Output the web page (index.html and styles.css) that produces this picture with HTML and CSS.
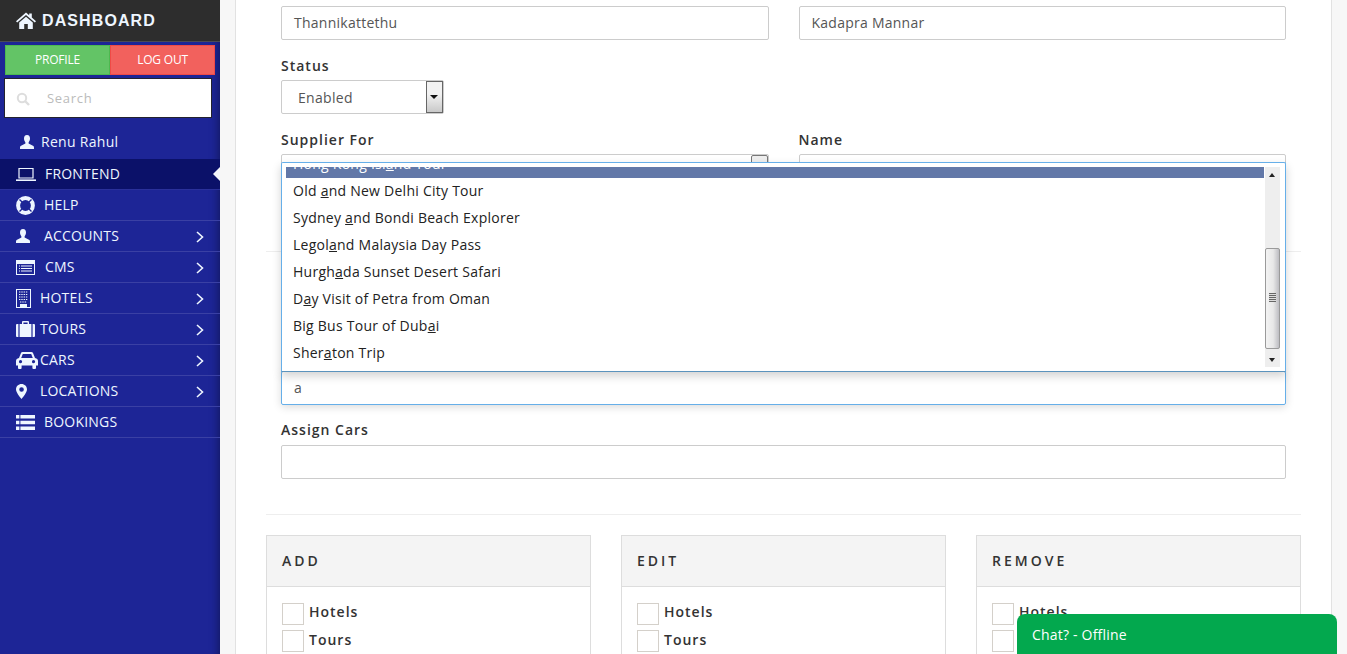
FILE: index.html
```html
<!DOCTYPE html>
<html lang="en">
<head>
<meta charset="UTF-8">
  <title>Dashboard</title>
<link rel="stylesheet" href="styles.css">
</head>

<body>
<aside class="sidebar">
    <div class="brand">
        <svg class="brand-icon" viewBox="0 0 20 17"><path d="M10 0.5 L13.2 3.3 V1.5 H15.8 V5.6 L20 9.2 L18.8 10.6 L10 3 L1.2 10.6 L0 9.2 Z M3.2 10.6 L10 4.8 L16.8 10.6 V17 H11.8 V12 H8.2 V17 H3.2 Z" fill="#eef6ff"/></svg>
        <span>DASHBOARD</span>
    </div>
    <div class="side-buttons">
        <a class="btn-profile">PROFILE</a>
        <a class="btn-logout">LOG OUT</a>
    </div>
    <div class="side-search">
        <svg class="search-icon" viewBox="0 0 14 14"><circle cx="6" cy="6" r="4.2" fill="none" stroke="#ddd" stroke-width="2"/><path d="M9 9 L13 13" stroke="#ddd" stroke-width="2.4"/></svg>
        <span>Search</span>
    </div>
    <div class="side-user">
        <svg class="i-user" viewBox="0 0 14 14"><path d="M7 0 C9.2 0 10 1.8 10 3.6 C10 5.4 9.2 6.6 8.6 7.4 V8.6 L13.4 11 C14 11.4 14 12.4 14 14 H0 C0 12.4 0 11.4 0.6 11 L5.4 8.6 V7.4 C4.8 6.6 4 5.4 4 3.6 C4 1.8 4.8 0 7 0 Z" fill="#eef6ff"/></svg>
        <span>Renu Rahul</span>
    </div>
    <ul class="side-nav">
        <li class="active">
            <svg class="ic ic-laptop" viewBox="0 0 20 13"><path d="M3 .5 H17 V10 H3 Z" fill="none" stroke="#eef6ff" stroke-width="1.2"/><path d="M0 11.4 H20 V13 H0 Z" fill="#eef6ff"/></svg>
            <span class="t-frontend">FRONTEND</span>
        </li>
        <li>
            <svg class="ic ic-ring" viewBox="0 0 19 19"><circle cx="9.5" cy="9.5" r="7.4" fill="none" stroke="#eef6ff" stroke-width="4"/><path d="M3.5 3.5 L7 7 M15.5 3.5 L12 7 M3.5 15.5 L7 12 M15.5 15.5 L12 12" stroke="#1d2596" stroke-width="1.4"/></svg>
            <span class="t-help">HELP</span>
        </li>
        <li>
            <svg class="ic ic-person" viewBox="0 0 14 14"><path d="M7 0 C9.2 0 10 1.8 10 3.6 C10 5.4 9.2 6.6 8.6 7.4 V8.6 L13.4 11 C14 11.4 14 12.4 14 14 H0 C0 12.4 0 11.4 0.6 11 L5.4 8.6 V7.4 C4.8 6.6 4 5.4 4 3.6 C4 1.8 4.8 0 7 0 Z" fill="#eef6ff"/></svg>
            <span class="t-accounts">ACCOUNTS</span>
            <svg class="chev" viewBox="0 0 8 12"><path d="M1 1 L6.5 6 L1 11" fill="none" stroke="#eef6ff" stroke-width="1.6"/></svg>
        </li>
        <li>
            <svg class="ic ic-card" viewBox="0 0 19 15"><path d="M0 0 H19 V15 H0 Z M1 4 V14 H18 V4 Z" fill="#eef6ff" fill-rule="evenodd"/><path d="M3 6 H4 M5 6 H16 M3 8.5 H4 M5 8.5 H16 M3 11 H4 M5 11 H16" stroke="#eef6ff" stroke-width="1.2"/></svg>
            <span class="t-cms">CMS</span>
            <svg class="chev" viewBox="0 0 8 12"><path d="M1 1 L6.5 6 L1 11" fill="none" stroke="#eef6ff" stroke-width="1.6"/></svg>
        </li>
        <li>
            <svg class="ic ic-building" viewBox="0 0 15 19"><path d="M0 0 H15 V19 H0 Z M1 1 V18 H4 V15 H11 V18 H14 V1 Z" fill="#eef6ff" fill-rule="evenodd"/><path d="M3 3 H12 M3 5.5 H12 M3 8 H12 M3 10.5 H12 M4 13 H11" stroke="#eef6ff" stroke-width="1" stroke-dasharray="1.4 .9"/></svg>
            <span class="t-hotels">HOTELS</span>
            <svg class="chev" viewBox="0 0 8 12"><path d="M1 1 L6.5 6 L1 11" fill="none" stroke="#eef6ff" stroke-width="1.6"/></svg>
        </li>
        <li>
            <svg class="ic ic-case" viewBox="0 0 19 16"><path d="M6 3 V1 Q6 0 7 0 H12 Q13 0 13 1 V3 H11.6 V1.4 H7.4 V3 Z" fill="#eef6ff"/><path d="M0 4 Q0 3 1 3 H2.4 V16 H1 Q0 16 0 15 Z M3.6 3 H15.4 V16 H3.6 Z M16.6 3 H18 Q19 3 19 4 V15 Q19 16 18 16 H16.6 Z" fill="#eef6ff"/></svg>
            <span class="t-tours">TOURS</span>
            <svg class="chev" viewBox="0 0 8 12"><path d="M1 1 L6.5 6 L1 11" fill="none" stroke="#eef6ff" stroke-width="1.6"/></svg>
        </li>
        <li>
            <svg class="ic ic-car" viewBox="0 0 22 17"><path d="M5 1 Q5.4 0 6.6 0 H15.4 Q16.6 0 17 1 L19 6 Q22 6.5 22 9 V13.5 H20 V16 Q20 17 19 17 H17.4 Q16.4 17 16.4 16 V13.5 H5.6 V16 Q5.6 17 4.6 17 H3 Q2 17 2 16 V13.5 H0 V9 Q0 6.5 3 6 Z M5.2 6 H16.8 L15.2 2 H6.8 Z M4.5 8 A1.6 1.6 0 1 0 4.6 11.2 A1.6 1.6 0 1 0 4.5 8 Z M17.5 8 A1.6 1.6 0 1 0 17.6 11.2 A1.6 1.6 0 1 0 17.5 8 Z" fill="#eef6ff" fill-rule="evenodd"/></svg>
            <span class="t-cars">CARS</span>
            <svg class="chev" viewBox="0 0 8 12"><path d="M1 1 L6.5 6 L1 11" fill="none" stroke="#eef6ff" stroke-width="1.6"/></svg>
        </li>
        <li>
            <svg class="ic ic-pin" viewBox="0 0 11 15"><path d="M5.5 0 C8.6 0 11 2.4 11 5.4 C11 8 7.4 12.6 5.5 15 C3.6 12.6 0 8 0 5.4 C0 2.4 2.4 0 5.5 0 Z M5.5 3.2 A2.3 2.3 0 1 0 5.6 7.8 A2.3 2.3 0 1 0 5.5 3.2 Z" fill="#eef6ff" fill-rule="evenodd"/></svg>
            <span class="t-locations">LOCATIONS</span>
            <svg class="chev" viewBox="0 0 8 12"><path d="M1 1 L6.5 6 L1 11" fill="none" stroke="#eef6ff" stroke-width="1.6"/></svg>
        </li>
        <li>
            <svg class="ic ic-list" viewBox="0 0 19 15"><path d="M0 0 H3.4 V3.4 H0 Z M4.4 0 H19 V3.4 H4.4 Z M0 5.8 H3.4 V9.2 H0 Z M4.4 5.8 H19 V9.2 H4.4 Z M0 11.6 H3.4 V15 H0 Z M4.4 11.6 H19 V15 H4.4 Z" fill="#eef6ff"/></svg>
            <span class="t-bookings">BOOKINGS</span>
        </li>
    </ul>
</aside>

<main class="main">
    <div class="panel">
        <div class="form-row first-row">
            <div class="col"><div class="field">Thannikattethu</div></div>
            <div class="col"><div class="field">Kadapra Mannar</div></div>
        </div>

        <div class="form-row status-row">
            <div class="col">
                <label>Status</label>
                <div class="select">
                    <span>Enabled</span>
                    <span class="select-arrow"></span>
                </div>
            </div>
        </div>

        <div class="form-row supplier-row">
            <div class="col">
                <label>Supplier For</label>
                <div class="field field-stub"><span class="stub-arrow"></span></div>
            </div>
            <div class="col">
                <label>Name</label>
                <div class="field"></div>
            </div>
        </div>

        <hr class="line line-a">

        <div class="form-row tours-row">
            <div class="col-wide">
                <div class="field field-focus">a</div>
            </div>
        </div>

        <div class="form-row cars-row">
            <div class="col-wide">
                <label>Assign Cars</label>
                <div class="field"></div>
            </div>
        </div>

        <hr class="line line-b">

        <div class="cards">
            <div class="card">
                <h4>ADD</h4>
                <div class="card-body">
                    <div class="check"><span class="box"></span>Hotels</div>
                    <div class="check"><span class="box"></span>Tours</div>
                    <div class="check"><span class="box"></span>Cars</div>
                </div>
            </div>
            <div class="card">
                <h4>EDIT</h4>
                <div class="card-body">
                    <div class="check"><span class="box"></span>Hotels</div>
                    <div class="check"><span class="box"></span>Tours</div>
                    <div class="check"><span class="box"></span>Cars</div>
                </div>
            </div>
            <div class="card">
                <h4>REMOVE</h4>
                <div class="card-body">
                    <div class="check"><span class="box"></span>Hotels</div>
                    <div class="check"><span class="box"></span>Tours</div>
                    <div class="check"><span class="box"></span>Cars</div>
                </div>
            </div>
        </div>

        <div class="dropdown">
            <ul class="results">
                <li class="current">Hong Kong Isl<u>a</u>nd Tour</li>
                <li>Old <u>a</u>nd New Delhi City Tour</li>
                <li>Sydney <u>a</u>nd Bondi Beach Explorer</li>
                <li>Legol<u>a</u>nd Malaysia Day Pass</li>
                <li>Hurgh<u>a</u>da Sunset Desert Safari</li>
                <li>D<u>a</u>y Visit of Petra from Oman</li>
                <li>Big Bus Tour of Dub<u>a</u>i</li>
                <li>Sher<u>a</u>ton Trip</li>
            </ul>
            <div class="scrollbar">
                <span class="sb-up"></span>
                <div class="sb-track"><div class="sb-thumb"><span class="sb-grip"></span></div></div>
                <span class="sb-down"></span>
            </div>
        </div>
    </div>
</main>

<div class="chat">Chat? - Offline</div>
</body>
</html>
```

FILE: styles.css
```css
* {
    box-sizing: border-box;
}

html, body {
    height: 100%;
}

body {
    margin: 0;
    display: flex;
    overflow: hidden;
    background-color: #f7f7f7;
    font-family: "Open Sans", sans-serif;
    font-size: 14px;
    letter-spacing: 1px;
    color: #333;
}

/* sidebar */
.sidebar {
    width: 220px;
    flex-shrink: 0;
    background-color: #1d2596;
    box-shadow: inset -8px 0 8px -6px rgba(0, 0, 0, 0.35);
    color: #eef6ff;
}

.brand {
    height: 42px;
    padding-left: 16px;
    display: flex;
    align-items: center;
    gap: 6px;
    background-color: #2d2d2d;
    border-bottom: 1px solid #4a4a55;
    font-family: "Liberation Sans", sans-serif;
    font-size: 16px;
    font-weight: bold;
    letter-spacing: 1.1px;
}

.brand-icon {
    width: 20px;
    height: 17px;
}

.side-buttons {
    display: flex;
    margin: 3px 5px 0;
    height: 30px;
    font-size: 12px;
    letter-spacing: -0.2px;
}

.side-buttons a {
    width: 50%;
    padding-bottom: 2px;
    display: flex;
    align-items: center;
    justify-content: center;
    color: #fff;
}

.btn-profile {
    background-color: #63c466;
    border: 1px solid #4cb950;
}

.btn-logout {
    background-color: #f2615d;
    border: 1px solid #ef4a46;
}

.side-search {
    width: 208px;
    height: 40px;
    margin: 3px 0 0 4px;
    padding-left: 11px;
    display: flex;
    align-items: center;
    gap: 17px;
    background-color: #fff;
    border: 1px solid #23232e;
    color: #bbb;
    font-size: 13px;
    letter-spacing: 0.7px;
}

.search-icon {
    width: 14px;
    height: 14px;
    margin-top: 2px;
}

.side-user {
    height: 41px;
    padding: 6px 0 0 20px;
    display: flex;
    align-items: center;
    gap: 7px;
    font-size: 14px;
    letter-spacing: 0.3px;
}

.i-user {
    width: 14px;
    height: 14px;
}

.side-nav {
    list-style: none;
    margin: 0;
    padding: 0;
    font-size: 14px;
    letter-spacing: 0.2px;
}

.side-nav li {
    position: relative;
    height: 31px;
    padding-left: 16px;
    display: flex;
    align-items: center;
    border-bottom: 1px solid #3a40a4;
}

.side-nav li span {
    margin-bottom: 2px;
}

.side-nav li.active {
    background-color: #0b1169;
    border-bottom-color: #2a309a;
}

.side-nav li.active::after {
    content: "";
    position: absolute;
    right: 0;
    top: 8px;
    border-style: solid;
    border-width: 7px 7px 7px 0;
    border-color: transparent #f4f6fb transparent transparent;
}

.ic {
    flex-shrink: 0;
}

.ic-laptop { width: 20px; height: 13px; }
.ic-ring { width: 19px; height: 19px; }
.ic-person { width: 14px; height: 14px; }
.ic-card { width: 19px; height: 15px; }
.ic-building { width: 15px; height: 19px; }
.ic-case { width: 19px; height: 16px; }
.ic-car { width: 22px; height: 17px; }
.ic-pin { width: 11px; height: 15px; }
.ic-list { width: 19px; height: 15px; }

.t-frontend { margin-left: 9px; }
.t-help { margin-left: 9px; }
.t-accounts { margin-left: 14px; }
.t-cms { margin-left: 10px; }
.t-hotels { margin-left: 9px; }
.t-tours { margin-left: 5px; }
.t-cars { margin-left: 2px; }
.t-locations { margin-left: 13px; }
.t-bookings { margin-left: 9px; }

.chev {
    position: absolute;
    right: 16px;
    top: 10px;
    width: 8px;
    height: 12px;
}

/* main column */
.main {
    flex: 1;
    padding: 0 15px;
    height: 100%;
}

.panel {
    position: relative;
    width: 1097px;
    height: 100%;
    padding: 6px 30px 0;
    overflow: hidden;
    background-color: #fff;
    border-left: 1px solid #e2e2e2;
    border-right: 1px solid #e2e2e2;
}

.form-row {
    display: flex;
    gap: 30px;
    padding: 0 15px;
}

.col {
    width: 487.5px;
}

.col-wide {
    width: 100%;
}

label {
    display: block;
    height: 20px;
    margin-bottom: 4px;
    line-height: 20px;
    font-weight: 600;
    color: #333;
}

.field {
    position: relative;
    height: 34px;
    padding: 0 12px;
    line-height: 32px;
    border: 1px solid #ccc;
    border-radius: 2px;
    color: #555;
    letter-spacing: 0.25px;
}

.field-focus {
    border-color: #66afe9;
    box-shadow: 0 2px 8px rgba(0, 0, 0, 0.15);
}

.stub-arrow {
    position: absolute;
    right: 0;
    top: 0;
    width: 17px;
    height: 32px;
    background-color: #eee;
    border: 1px solid #777;
    border-radius: 2px;
}

.status-row {
    margin-top: 16px;
}

.select {
    position: relative;
    width: 163px;
    height: 34px;
    padding-left: 16px;
    line-height: 33px;
    border: 1px solid #ccc;
    border-radius: 2px;
    color: #555;
    letter-spacing: 0.3px;
}

.select-arrow {
    position: absolute;
    right: 0;
    top: 0;
    width: 17px;
    height: 32px;
    border: 1px solid #666;
    background: linear-gradient(#f2f2f2 40%, #c9c9c9);
}

.select-arrow::after {
    content: "";
    position: absolute;
    left: 3px;
    top: 13px;
    border-style: solid;
    border-width: 4px 4px 0;
    border-color: #111 transparent transparent;
}

.supplier-row {
    margin-top: 16px;
}

.line {
    margin: 0;
    border: none;
    border-top: 1px solid #eee;
}

.line-a {
    margin-top: 63px;
}

.tours-row {
    margin-top: 119px;
}

.cars-row {
    margin-top: 15px;
}

.cars-row label {
    margin-bottom: 5px;
}

.line-b {
    margin-top: 35px;
}

/* permission cards */
.cards {
    display: flex;
    gap: 30px;
    margin-top: 20px;
}

.card {
    width: 325px;
    border: 1px solid #ddd;
}

.card h4 {
    height: 51px;
    margin: 0;
    padding-left: 15px;
    line-height: 50px;
    background-color: #f4f4f4;
    border-bottom: 1px solid #ddd;
    font-size: 14px;
    font-weight: 600;
    letter-spacing: 3px;
}

.card-body {
    padding: 16px 15px;
}

.check {
    height: 28px;
    display: flex;
    align-items: flex-start;
    gap: 5px;
    font-weight: 600;
    line-height: 18px;
}

.check + .check .box {
    margin-top: -1px;
}

.box {
    width: 22px;
    height: 22px;
    background-color: #fff;
    border: 1px solid #d4d0ca;
}

/* autocomplete list sitting over the form */
.dropdown {
    position: absolute;
    left: 45px;
    top: 162px;
    width: 1005px;
    height: 210px;
    padding: 4px 5px 4px 4px;
    background-color: #fff;
    border: 1px solid #66afe9;
    border-bottom-color: #5b93bd;
    border-radius: 2px 2px 0 0;
    box-shadow: 0 4px 10px rgba(0, 0, 0, 0.18);
    display: flex;
    gap: 1px;
}

.results {
    flex: 1;
    list-style: none;
    margin: 0;
    padding: 0;
    height: 200px;
    overflow: hidden;
    color: #222;
    letter-spacing: 0.25px;
}

.results li {
    height: 27px;
    padding-left: 7px;
    line-height: 25px;
}

.results li.current {
    margin-top: -16px;
    color: #fff;
    background-color: #6278a8;
}

.scrollbar {
    width: 15px;
    height: 200px;
    display: flex;
    flex-direction: column;
    background-color: #eee;
}

.sb-up,
.sb-down {
    height: 15px;
    flex-shrink: 0;
    position: relative;
}

.sb-up::after,
.sb-down::after {
    content: "";
    position: absolute;
    left: 4px;
    top: 6px;
    border-style: solid;
    border-color: transparent;
}

.sb-up::after {
    border-width: 0 3.5px 4px;
    border-bottom-color: #222;
}

.sb-down::after {
    border-width: 4px 3.5px 0;
    border-top-color: #222;
}

.sb-track {
    flex: 1;
    padding-top: 66px;
}

.sb-thumb {
    position: relative;
    height: 101px;
    background: linear-gradient(90deg, #f3f3f3, #e8e8e8 55%, #bdbdc2);
    border: 1px solid #9a9a9a;
    border-radius: 2px;
}

.sb-grip {
    position: absolute;
    left: 3px;
    top: 44px;
    width: 7px;
    height: 9px;
    background: repeating-linear-gradient(#666 0 1px, #ddd 1px 2px);
}

/* chat tab */
.chat {
    position: fixed;
    left: 1017px;
    bottom: 0;
    width: 320px;
    height: 40px;
    padding-left: 15px;
    line-height: 41px;
    background-color: #03a84e;
    border-radius: 8px 8px 0 0;
    color: #fff;
    font-size: 14px;
    letter-spacing: 0.2px;
}
```
